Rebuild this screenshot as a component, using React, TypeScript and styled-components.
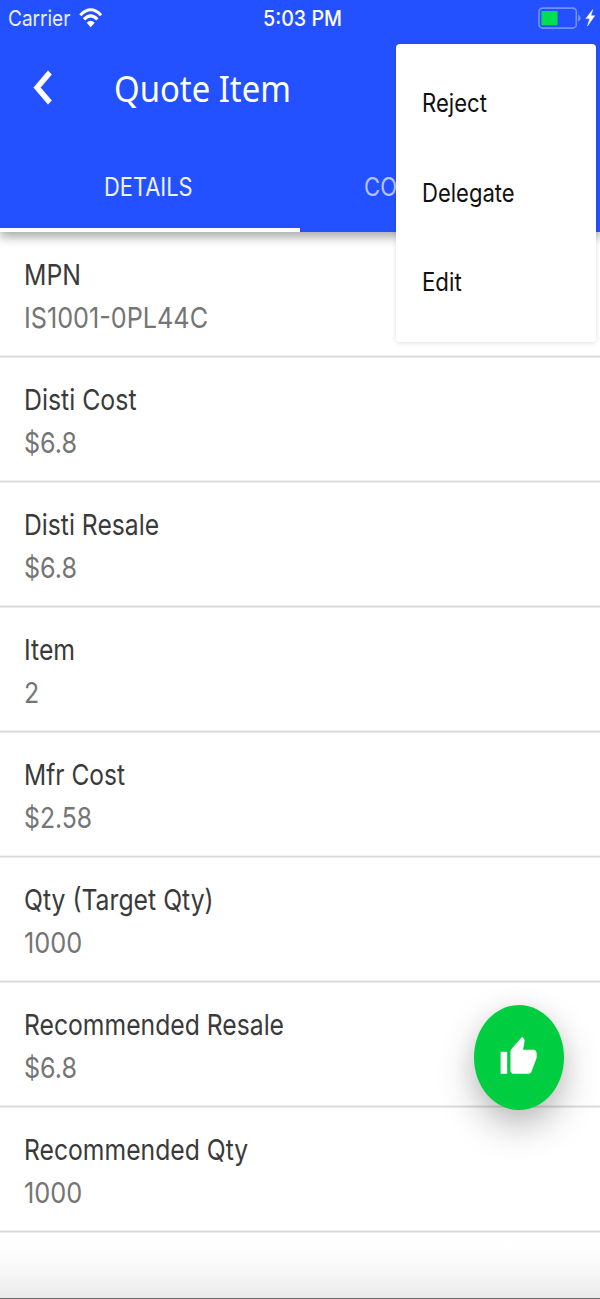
import React from "react";
import styled, { createGlobalStyle } from "styled-components";

const GlobalStyle = createGlobalStyle`
  *, *::before, *::after { box-sizing: border-box; }
  html, body { margin: 0; padding: 0; background: #fff; }
  body { font-family: Inter, "Liberation Sans", sans-serif; }
`;

const Screen = styled.div`
  position: relative;
  display: flex;
  flex-direction: column;
  width: 600px;
  height: 1299px;
  overflow: hidden;
  background: #fff;
`;

/* Text set slightly narrower than the font's natural width. */
const Condensed = styled.span<{ $ratio?: number }>`
  display: block;
  width: max-content;
  white-space: nowrap;
  transform: scaleX(${(p) => p.$ratio ?? 0.856});
  transform-origin: 0 50%;
`;

const Header = styled.header`
  position: relative;
  z-index: 1;
  flex: none;
  display: flex;
  flex-direction: column;
  height: 232.4px;
  background: #2451ff;
  color: #fff;
  box-shadow: 0 5px 10px rgba(0, 0, 0, 0.34);
`;

const StatusBar = styled.div`
  display: grid;
  grid-template-columns: 262.7px 1fr auto;
  align-items: center;
  height: 36px;
  padding-right: 4px;
  font-size: 22px;
  line-height: 36px;
`;

const Carrier = styled.div`
  display: flex;
  align-items: center;
  padding-left: 7.6px;
`;

const CarrierName = styled(Condensed)`
  flex: none;
  color: #e9eeff;
`;

const WifiIcon = styled.svg`
  flex: none;
  margin-left: -1.1px;
`;

const Clock = styled(Condensed)`
  font-weight: 500;
`;

const Toolbar = styled.div`
  display: flex;
  align-items: center;
  height: 103px;
  padding-left: 33px;
`;

const BackButton = styled.button`
  display: flex;
  flex: none;
  width: 81px;
  padding: 0;
  border: 0;
  background: none;
  color: inherit;
`;

const Title = styled.h1`
  margin: 0;
  padding-top: 2px;
  font: 400 36px/50px "Noto Sans", sans-serif;
`;

const Tabs = styled.nav`
  display: grid;
  grid-template-columns: 300px 300px;
  flex: 1;
`;

const Tab = styled.div<{ $active?: boolean; $inset: number }>`
  display: flex;
  align-items: center;
  padding: 6.8px 0 0 ${(p) => p.$inset}px;
  border-bottom: 4px solid ${(p) => (p.$active ? "#fff" : "transparent")};
  color: ${(p) => (p.$active ? "#eef2ff" : "rgba(255, 255, 255, 0.68)")};
  font-size: 25px;
  line-height: 30px;
`;

const List = styled.dl`
  flex: none;
  margin: 0;
  padding-top: 0.6px;
`;

/* The divider is a soft hairline along the bottom edge. */
const Row = styled.div`
  height: 125px;
  padding: 20.4px 24px 0 23.7px;
  background: linear-gradient(
      #f0f0f0 0 1px,
      #d9d9d9 1px 2px,
      #ececec 2px 3px
    )
    left bottom / 100% 3px no-repeat;
  font-size: 29px;
  line-height: 43px;
`;

const Label = styled.dt`
  color: #3a3a3a;
`;

const Value = styled.dd`
  margin: 0;
  color: #757575;
`;

const Footer = styled.footer`
  flex: 1;
  border-bottom: 1px solid #6c6c6c;
  background: linear-gradient(#fff 0%, #fefefe 25%, #f7f7f7 60%, #eaeaea 100%);
`;

const Menu = styled.ul`
  position: absolute;
  z-index: 2;
  top: 43.5px;
  right: 3.7px;
  width: 200px;
  height: 298.8px;
  margin: 0;
  padding: 15.6px 0 0 25.4px;
  border-radius: 4px;
  background: #fff;
  box-shadow: 0 1px 5px rgba(0, 0, 0, 0.12);
  list-style: none;
`;

const MenuItem = styled.li`
  height: 89.5px;
  color: #111;
  font-size: 25px;
  line-height: 89.5px;
`;

const ApproveButton = styled.button`
  position: absolute;
  z-index: 2;
  right: 36px;
  bottom: 189.5px;
  display: flex;
  align-items: center;
  justify-content: center;
  width: 90.5px;
  height: 105px;
  padding: 0;
  border: 0;
  border-radius: 50%;
  background: #00ce40;
  color: #fff;
  box-shadow: 0 16px 36px rgba(0, 0, 0, 0.26), 0 2px 24px rgba(0, 0, 0, 0.05);
`;

type Line = { text: string; ratio: number };
const fields: { label: Line; value: Line }[] = [
  { label: { text: "MPN", ratio: 0.855 }, value: { text: "IS1001-0PL44C", ratio: 0.869 } },
  { label: { text: "Disti Cost", ratio: 0.857 }, value: { text: "$6.8", ratio: 0.865 } },
  { label: { text: "Disti Resale", ratio: 0.852 }, value: { text: "$6.8", ratio: 0.865 } },
  { label: { text: "Item", ratio: 0.855 }, value: { text: "2", ratio: 0.86 } },
  { label: { text: "Mfr Cost", ratio: 0.846 }, value: { text: "$2.58", ratio: 0.854 } },
  { label: { text: "Qty (Target Qty)", ratio: 0.854 }, value: { text: "1000", ratio: 0.874 } },
  { label: { text: "Recommended Resale", ratio: 0.852 }, value: { text: "$6.8", ratio: 0.865 } },
  { label: { text: "Recommended Qty", ratio: 0.852 }, value: { text: "1000", ratio: 0.874 } },
];

const actions: Line[] = [
  { text: "Reject", ratio: 0.885 },
  { text: "Delegate", ratio: 0.882 },
  { text: "Edit", ratio: 0.89 },
];

const Wifi = () => (
  <WifiIcon width="24" height="20" viewBox="0 0 24 20" fill="none" stroke="#fff" strokeWidth="3.1">
    <path d="M1.3 7.2Q11.7 -3.8 22.1 7.2" />
    <path d="M5 11.4Q11.7 4.4 18.4 11.4" />
    <path d="M7.7 14.8Q11.7 10.6 15.7 14.8L11.7 19.2Z" fill="#fff" stroke="none" />
  </WifiIcon>
);

const Battery = () => (
  <svg width="58" height="24" viewBox="0 0 58 24">
    <rect x="1" y="2.1" width="37.3" height="20" rx="3.6" fill="none" stroke="#fff" strokeOpacity="0.36" strokeWidth="1.6" />
    <rect x="3.4" y="5" width="16.2" height="14.2" rx="0.8" fill="#00e04e" />
    <path d="M40.2 8.4Q42.6 9.6 42.6 12.1Q42.6 14.6 40.2 15.8Z" fill="#fff" fillOpacity="0.4" />
    <path d="M54.8 3.6L47.9 12.6H51.8L49.5 20L56.7 9.8H52.8Z" fill="#fff" stroke="#fff" strokeWidth="0.5" />
  </svg>
);

const Chevron = () => (
  <svg width="20" height="36" viewBox="0 0 20 36">
    <path d="M15 0.8L18.5 4.6L7.4 17.6L18.5 30.4L15 34.2L0.8 17.6Z" fill="#fff" stroke="#fff" strokeWidth="0.6" />
  </svg>
);

const ThumbUp = () => (
  <svg width="39.3" height="44.4" viewBox="0 0 24 24" preserveAspectRatio="none" fill="currentColor">
    <path d="M1 21h4V9H1v12zm22-11c0-1.1-.9-2-2-2h-6.31l.95-4.57.03-.32c0-.41-.17-.79-.44-1.06L14.17 1 7.59 7.59C7.22 7.95 7 8.45 7 9v10c0 1.1.9 2 2 2h9c.83 0 1.54-.5 1.84-1.22l3.02-7.05c.09-.23.14-.47.14-.73v-2z" />
  </svg>
);

export default function App() {
  return (
    <>
      <GlobalStyle />
      <Screen>
        <Header>
          <StatusBar>
            <Carrier>
              <CarrierName $ratio={0.865}>Carrier</CarrierName>
              <Wifi />
            </Carrier>
            <Clock $ratio={0.895}>5:03 PM</Clock>
            <Battery />
          </StatusBar>
          <Toolbar>
            <BackButton aria-label="Back">
              <Chevron />
            </BackButton>
            <Title>
              <Condensed $ratio={0.912}>Quote Item</Condensed>
            </Title>
          </Toolbar>
          <Tabs>
            <Tab $active $inset={103.6}>
              <Condensed $ratio={0.875}>DETAILS</Condensed>
            </Tab>
            <Tab $inset={64}>
              <Condensed $ratio={0.885}>CO</Condensed>
            </Tab>
          </Tabs>
        </Header>
        <List>
          {fields.map(({ label, value }) => (
            <Row key={label.text}>
              <Label>
                <Condensed $ratio={label.ratio}>{label.text}</Condensed>
              </Label>
              <Value>
                <Condensed $ratio={value.ratio}>{value.text}</Condensed>
              </Value>
            </Row>
          ))}
        </List>
        <Footer />
        <Menu>
          {actions.map((action) => (
            <MenuItem key={action.text}>
              <Condensed $ratio={action.ratio}>{action.text}</Condensed>
            </MenuItem>
          ))}
        </Menu>
        <ApproveButton aria-label="Approve">
          <ThumbUp />
        </ApproveButton>
      </Screen>
    </>
  );
}
